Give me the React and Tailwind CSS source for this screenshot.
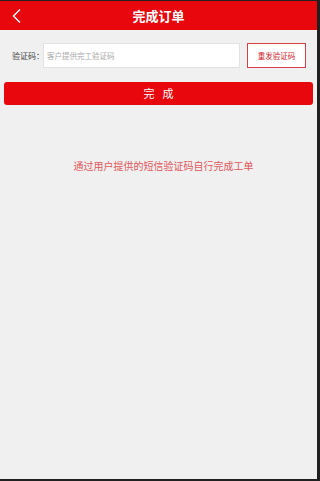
export default function App() {
  const font = { fontFamily: '"Noto Sans CJK SC", "Noto Sans", sans-serif' };
  return (
    <div className="w-[320px] h-[481px] bg-[#202020] pt-px pr-[3px] pb-[2px] flex flex-col" style={font}>
      <div className="flex-1 bg-[#f0f0f0] flex flex-col">
        <div className="h-[29px] bg-[#e8070c] flex items-center relative">
          <svg className="absolute left-[11px] top-[7px]" width="11" height="16" viewBox="0 0 11 16">
            <path d="M9 1.5 L2.5 8 L9 14.5" fill="none" stroke="#ffffff" strokeWidth="1.4" />
          </svg>
          <div className="flex-1 text-center text-white text-[13px] font-bold leading-none">完成订单</div>
        </div>
        <div className="flex items-center mt-[13px] pl-[12px] pr-[11px]">
          <span className="text-[8px] text-[#444] w-[31px] shrink-0 whitespace-nowrap leading-none">验证码：</span>
          <div className="w-[197px] shrink-0 h-[25px] bg-white border border-[#e2e2e2] flex items-center pl-[3px] text-[7.5px] text-[#aaa] leading-none whitespace-nowrap">客户提供完工验证码</div>
          <div className="ml-[7px] w-[59px] shrink-0 h-[25px] bg-white border border-[#d8404a] flex items-center justify-center text-[7.5px] text-[#d0202a] leading-none whitespace-nowrap">重发验证码</div>
        </div>
        <div className="mx-[4px] mt-[14px] h-[23px] bg-[#e8070c] rounded-[3px] flex items-center justify-center text-white text-[11px] leading-none tracking-[8px] pl-[8px]">完成</div>
        <div className="mt-[56px] text-center text-[10px] text-[#e0585c] leading-none pl-[10px]">通过用户提供的短信验证码自行完成工单</div>
      </div>
    </div>
  );
}
